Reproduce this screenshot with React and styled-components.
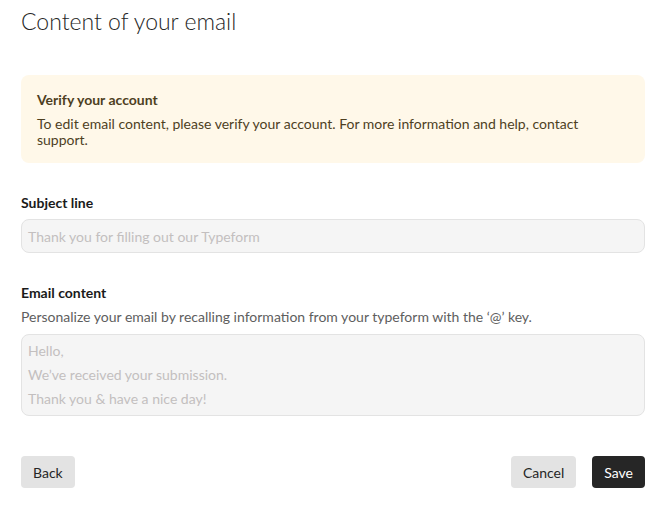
import React from "react";
import styled, { createGlobalStyle } from "styled-components";

const Global = createGlobalStyle`
  html, body { margin: 0; padding: 0; background: #fff; }
  body { font-family: Lato, "Open Sans", sans-serif; color: #262626; }
`;

const Page = styled.div`
  padding: 4px 15px 0 21px;
  display: flex;
  flex-direction: column;
`;

const Title = styled.h1`
  margin: 0;
  font-size: 23px;
  font-weight: 300;
  line-height: 34px;
  color: #262626;
`;

const Alert = styled.div`
  margin-top: 37px;
  background: #fff8e9;
  border-radius: 8px;
  padding: 15px 16px 15px 16px;
  display: flex;
  flex-direction: column;
  gap: 6px;
`;

const AlertTitle = styled.div`
  font-size: 14px;
  font-weight: 700;
  line-height: 20px;
  color: #4e3f1f;
`;

const AlertText = styled.div`
  font-size: 14px;
  line-height: 16px;
  color: #4e3f1f;
`;

const Field = styled.div`
  margin-top: ${(p) => p.$mt}px;
  display: flex;
  flex-direction: column;
`;

const Label = styled.label`
  font-size: 14px;
  font-weight: 700;
  line-height: 20px;
  color: #1a1a1a;
`;

const Help = styled.div`
  font-size: 14px;
  line-height: 20px;
  color: #5e5e5e;
  margin-top: 4px;
`;

const Input = styled.div`
  box-sizing: border-box;
  margin-top: ${(p) => p.$mt}px;
  background: #f5f5f5;
  border: 1px solid #e3e3e3;
  border-radius: 8px;
  padding: ${(p) => p.$pad};
  color: #c3bfbf;
  font-size: 14px;
  line-height: ${(p) => p.$lh}px;
`;

const Footer = styled.div`
  margin-top: 40px;
  display: flex;
  align-items: center;
  justify-content: space-between;
`;

const Group = styled.div`
  display: flex;
  gap: 16px;
`;

const Button = styled.button`
  height: 32px;
  padding: 0 ${(p) => p.$px}px;
  border: none;
  border-radius: 4px;
  font-family: inherit;
  font-size: 14px;
  background: ${(p) => (p.$primary ? "#262626" : "#e3e3e3")};
  color: ${(p) => (p.$primary ? "#fff" : "#262626")};
  cursor: pointer;
`;

export default function App() {
  return (
    <>
      <Global />
      <Page>
        <Title>Content of your email</Title>
        <Alert>
          <AlertTitle>Verify your account</AlertTitle>
          <AlertText>
            To edit email content, please verify your account. For more information and help, contact support.
          </AlertText>
        </Alert>
        <Field $mt={30}>
          <Label>Subject line</Label>
          <Input $mt={6} $pad="7px 6px 6px" $lh={19}>
            Thank you for filling out our Typeform
          </Input>
        </Field>
        <Field $mt={30}>
          <Label>Email content</Label>
          <Help>Personalize your email by recalling information from your typeform with the ‘@’ key.</Help>
          <Input $mt={7} $pad="4px 6px 4px" $lh={24}>
            <div>Hello,</div>
            <div>We’ve received your submission.</div>
            <div>Thank you &amp; have a nice day!</div>
          </Input>
        </Field>
        <Footer>
          <Button $px={12}>Back</Button>
          <Group>
            <Button $px={12}>Cancel</Button>
            <Button $px={12} $primary>Save</Button>
          </Group>
        </Footer>
      </Page>
    </>
  );
}
